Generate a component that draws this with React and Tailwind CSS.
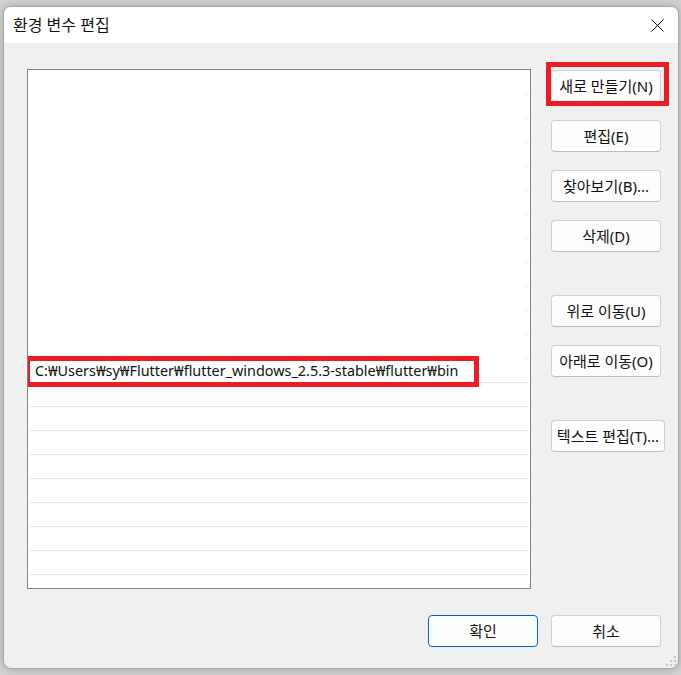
import React from "react";

const FONT = "font-['Noto_Sans','Noto_Sans_CJK_KR',sans-serif]";

const PATH_ROW = 12;
const ROW_COUNT = 22;

const SIDE_BUTTONS = [
  { label: "새로 만들기(N)", mt: "mt-0", marked: true },
  { label: "편집(E)", mt: "mt-[18px]" },
  { label: "찾아보기(B)...", mt: "mt-[18px]" },
  { label: "삭제(D)", mt: "mt-[18px]" },
  { label: "위로 이동(U)", mt: "mt-[43px]" },
  { label: "아래로 이동(O)", mt: "mt-[18px]" },
  { label: "텍스트 편집(T)...", mt: "mt-[43px]", wide: true },
];

function WinButton({ children, primary, className = "" }) {
  return (
    <button
      className={`h-[32px] rounded-[4px] border bg-[#fdfdfd] text-[15px] leading-none text-[#111] whitespace-nowrap
        ${primary ? "border-[#0067c0]" : "border-[#d0d0d0] border-b-[#bcbcbc]"} ${className}`}
    >
      {children}
    </button>
  );
}

function ListRow({ index }) {
  if (index === PATH_ROW) {
    return (
      <div className="relative h-[24px] shrink-0 border-b border-[#e8e8e8] mx-px">
        <span className="block pl-[6px] text-[14.4px] leading-[23px] text-[#111] whitespace-nowrap">
          C:₩Users₩sy₩Flutter₩flutter_windows_2.5.3-stable₩flutter₩bin
        </span>
        {/* red annotation box */}
        <div className="absolute -left-[4px] -top-[3px] w-[454px] h-[31px] border-[5px] border-[#ed1c24]" />
      </div>
    );
  }
  if (index < PATH_ROW) {
    return (
      <div className="h-[24px] shrink-0 flex items-end justify-end">
        <div className="w-[4px] h-px bg-[#e6e6e6] mr-px" />
      </div>
    );
  }
  return <div className="h-[24px] shrink-0 border-b border-[#e8e8e8] mx-px" />;
}

export default function App() {
  return (
    <div className={`w-[681px] h-[675px] bg-[#d4d4d4] pt-[6px] pl-[3px] overflow-hidden ${FONT}`}>
      <div className="relative w-[676px] h-[663px] rounded-[8px] border border-[#a8a8a8] bg-[#f0f0f0] overflow-hidden flex flex-col shadow-[0_0_10px_rgba(0,0,0,0.25)]">
        {/* title bar */}
        <div className="h-[36px] shrink-0 bg-white flex items-center justify-between pl-[9px] pr-[14px]">
          <span className="text-[16px] text-[#111]">환경 변수 편집</span>
          <svg width="13" height="13" viewBox="0 0 13 13" className="mt-[1px]">
            <path d="M0.5 0.5 L12.5 12.5 M12.5 0.5 L0.5 12.5" stroke="#000" strokeWidth="1" fill="none" />
          </svg>
        </div>

        {/* body */}
        <div className="flex-1 flex flex-col pl-[23px] pt-[26px]">
          <div className="flex">
            <div className="w-[504px] h-[520px] border border-[#848484] bg-white overflow-hidden flex flex-col pt-px">
              {Array.from({ length: ROW_COUNT }, (_, i) => (
                <ListRow key={i} index={i} />
              ))}
            </div>

            <div className="ml-[20px] pt-px flex flex-col items-start">
              {SIDE_BUTTONS.map((b) => (
                <div key={b.label} className={`relative ${b.mt}`}>
                  <WinButton className={b.wide ? "w-[114px] px-[3px]" : "w-[110px]"}>{b.label}</WinButton>
                  {b.marked && (
                    <div className="absolute -left-[5px] -top-[8px] w-[123px] h-[44px] border-[5px] border-[#ed1c24]" />
                  )}
                </div>
              ))}
            </div>
          </div>

          <div className="mt-[26px] flex justify-end gap-[13px] pr-[17px]">
            <WinButton primary className="w-[110px]">확인</WinButton>
            <WinButton className="w-[110px]">취소</WinButton>
          </div>
        </div>

        {/* resize grip */}
        <svg width="12" height="12" viewBox="0 0 12 12" className="absolute right-[1px] bottom-[1px]">
          <g fill="#c6c6c6">
            <rect x="9" y="1" width="2" height="2" />
            <rect x="5" y="5" width="2" height="2" />
            <rect x="9" y="5" width="2" height="2" />
            <rect x="1" y="9" width="2" height="2" />
            <rect x="5" y="9" width="2" height="2" />
            <rect x="9" y="9" width="2" height="2" />
          </g>
        </svg>
      </div>
    </div>
  );
}
